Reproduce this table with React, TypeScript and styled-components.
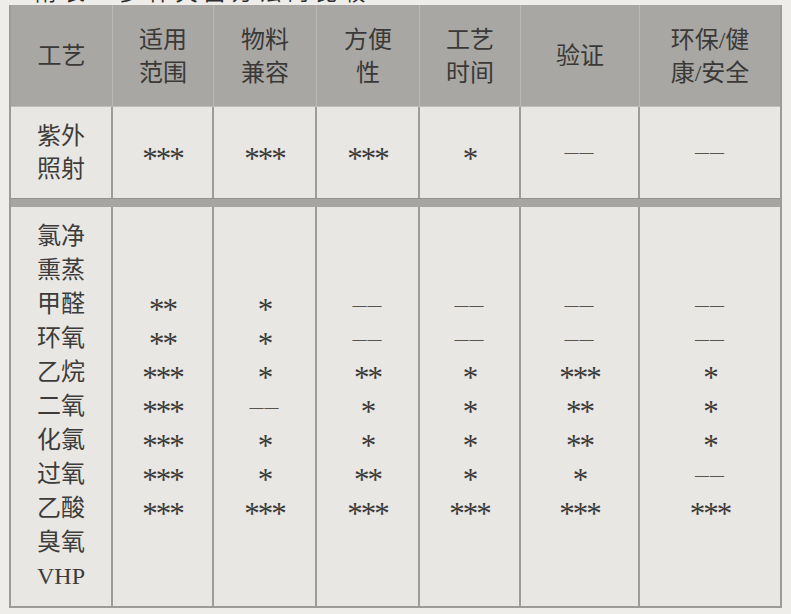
import styled, { createGlobalStyle } from 'styled-components';

const GlobalStyle = createGlobalStyle`
  html, body {
    margin: 0;
    background: #eeedea;
  }
  body {
    font-family: "Liberation Serif", "Noto Sans CJK SC", serif;
    color: #3d3c3a;
  }
`;

const Page = styled.div`
  width: 791px;
  height: 614px;
  overflow: hidden;
  padding-left: 9px;
  box-sizing: border-box;
`;

const Caption = styled.div`
  height: 5px;
  overflow: hidden;
  padding-left: 26px;
  span {
    display: block;
    font-size: 22px;
    line-height: 24px;
    margin-top: -19px;
    letter-spacing: 6px;
    color: #2e2e2e;
    white-space: nowrap;
  }
`;

const Table = styled.div`
  display: grid;
  grid-template-columns: 102px 101px 103px 103px 101px 119px 140px;
  width: 773px;
  border-left: 2px solid #9d9b98;
  border-right: 2px solid #9d9b98;
  border-bottom: 2px solid #9d9b98;
  box-sizing: border-box;
`;

const HeadCell = styled.div<{ $last?: boolean }>`
  height: 102px;
  background: #a8a7a4;
  border-right: ${(p) => (p.$last ? 'none' : '1px solid #bab9b6')};
  border-bottom: 1px solid #bebdba;
  display: flex;
  align-items: center;
  justify-content: center;
  text-align: center;
  font-size: 24px;
  line-height: 33px;
  padding-top: 2px;
  box-sizing: border-box;
  color: #3a3937;
`;

const Cell = styled.div<{ $last?: boolean; $tall?: boolean }>`
  height: ${(p) => (p.$tall ? '399px' : '91px')};
  background: #e8e7e4;
  border-right: ${(p) => (p.$last ? 'none' : '2px solid #9e9c99')};
  display: flex;
  flex-direction: column;
  align-items: center;
  justify-content: ${(p) => (p.$tall ? 'flex-start' : 'center')};
  padding-top: ${(p) => (p.$tall ? '12px' : '0')};
  box-sizing: border-box;
  font-size: 24px;
  line-height: 33px;
`;

const Separator = styled.div`
  grid-column: 1 / -1;
  height: 9px;
  background: #a6a5a2;
  border-top: 1px solid #939290;
  box-sizing: border-box;
`;

const Line = styled.div`
  height: 34px;
  line-height: 34px;
  white-space: nowrap;
`;

const Stars = styled.span`
  display: inline-block;
  font-size: 31px;
  letter-spacing: -2px;
  color: #3b3a38;
  transform: translateY(6px);
`;

const Dash = styled.span`
  display: inline-block;
  font-size: 14px;
  font-weight: 700;
  letter-spacing: 1px;
  vertical-align: middle;
  color: #56554f;
`;

const heads = ['工艺', '适用\n范围', '物料\n兼容', '方便\n性', '工艺\n时间', '验证', '环保/健\n康/安全'];
const uvRow = ['***', '***', '***', '*', '——', '——'];

const chemNames = ['氯净', '熏蒸', '甲醛', '环氧', '乙烷', '二氧', '化氯', '过氧', '乙酸', '臭氧', 'VHP'];
// one column per property, one entry per chemical line (lines 3..9 carry values)
const chemCols = [
  ['**', '**', '***', '***', '***', '***', '***'],
  ['*', '*', '*', '——', '*', '*', '***'],
  ['——', '——', '**', '*', '*', '**', '***'],
  ['——', '——', '*', '*', '*', '*', '***'],
  ['——', '——', '***', '**', '**', '*', '***'],
  ['——', '——', '*', '*', '*', '——', '***'],
];

const Mark = ({ v }: { v: string }) =>
  v.startsWith('*') ? <Stars>{v}</Stars> : <Dash>{v}</Dash>;

export default function App() {
  return (
    <Page>
      <GlobalStyle />
      <Caption>
        <span>附表1 多种灭菌方法的比较</span>
      </Caption>
      <Table>
        {heads.map((h, i) => (
          <HeadCell key={h} $last={i === heads.length - 1}>
            <div>
              {h.split('\n').map((l) => (
                <div key={l}>{l}</div>
              ))}
            </div>
          </HeadCell>
        ))}

        <Cell>
          <div>紫外</div>
          <div>照射</div>
        </Cell>
        {uvRow.map((v, i) => (
          <Cell key={i} $last={i === uvRow.length - 1}>
            <Mark v={v} />
          </Cell>
        ))}

        <Separator />

        <Cell $tall>
          {chemNames.map((n) => (
            <Line key={n}>{n}</Line>
          ))}
        </Cell>
        {chemCols.map((col, i) => (
          <Cell key={i} $tall $last={i === chemCols.length - 1}>
            <Line />
            <Line />
            {col.map((v, j) => (
              <Line key={j}>
                <Mark v={v} />
              </Line>
            ))}
          </Cell>
        ))}
      </Table>
    </Page>
  );
}
